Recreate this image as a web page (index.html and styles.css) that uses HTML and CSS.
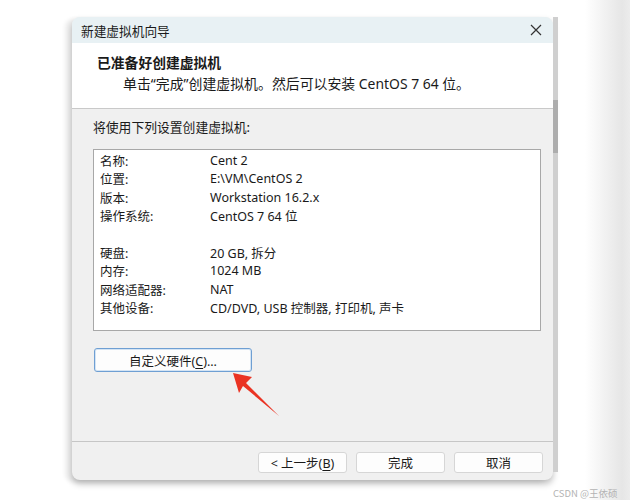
FILE: index.html
```html
<!DOCTYPE html>
<html lang="zh-CN">
<head>
    <meta charset="UTF-8" />
    <title>新建虚拟机向导</title>
    <link rel="stylesheet" href="styles.css">
</head>
<body>
    <div class="window">
        <div class="dialog">
            <div class="titlebar">
                <span>新建虚拟机向导</span>
                <svg class="close" width="12" height="12" viewBox="0 0 12 12">
                    <path d="M1 1 L11 11 M11 1 L1 11" stroke="#333" stroke-width="1.2" fill="none"/>
                </svg>
            </div>

            <div class="header">
                <h1>已准备好创建虚拟机</h1>
                <p>单击“完成”创建虚拟机。然后可以安装 CentOS 7 64 位。</p>
            </div>

            <div class="content">
                <p class="intro">将使用下列设置创建虚拟机:</p>
                <div class="summary">
                    <span>名称:</span><span>Cent 2</span>
                    <span>位置:</span><span>E:\VM\CentOS 2</span>
                    <span>版本:</span><span>Workstation 16.2.x</span>
                    <span>操作系统:</span><span>CentOS 7 64 位</span>
                    <span class="gap"></span><span class="gap"></span>
                    <span>硬盘:</span><span>20 GB, 拆分</span>
                    <span>内存:</span><span>1024 MB</span>
                    <span>网络适配器:</span><span>NAT</span>
                    <span>其他设备:</span><span>CD/DVD, USB 控制器, 打印机, 声卡</span>
                </div>
                <button class="btn custom">自定义硬件(<u>C</u>)...</button>
            </div>

            <div class="footer">
                <button class="btn">&lt; 上一步(<u>B</u>)</button>
                <button class="btn">完成</button>
                <button class="btn">取消</button>
            </div>
        </div>
        <div class="scroll"><div class="thumb"></div></div>
    </div>

    <!-- 红色标注箭头 -->
    <svg class="arrow" width="630" height="500" viewBox="0 0 630 500">
        <polygon points="233,373 252,377 246,383 279,416 243,386 239,393" fill="#ea3323"/>
    </svg>

    <div class="watermark">CSDN @王依硕</div>
</body>
</html>
```

FILE: styles.css
```css
body {
    margin: 0;
    width: 630px;
    height: 500px;
    overflow: hidden;
    position: relative;
    font-family: "Noto Sans", "Noto Sans CJK SC", sans-serif;
    font-size: 12.5px;
    color: #1a1a1a;
    background: linear-gradient(to right, #fff 0, #fff 585px, #e6e6e6 622px, #ececec 630px);
}

.window {
    display: flex;
    padding: 17px 0 0 72px;
}

.dialog {
    width: 481px;
    height: 463px;
    display: flex;
    flex-direction: column;
    background: #f0f0f0;
    border-radius: 8px;
    overflow: hidden;
    box-shadow: -7px 2px 4px rgba(0, 0, 0, 0.07), 0 4px 6px rgba(0, 0, 0, 0.25);
}

.titlebar {
    height: 26px;
    display: flex;
    align-items: center;
    justify-content: space-between;
    padding: 0 11px 0 9px;
    background: #e8f1f4;
    font-family: "Noto Sans CJK SC", sans-serif;
    font-size: 12.7px;
}

.close {
    display: block;
}

.header {
    height: 66px;
    box-sizing: border-box;
    background: #fff;
    border-bottom: 1px solid #c9c9c9;
    padding: 9px 0 0 25px;
}

.header h1 {
    margin: 0;
    font-family: "Noto Sans CJK SC", sans-serif;
    font-size: 13.8px;
    font-weight: 700;
    line-height: 20px;
}

.header p {
    margin: 3px 0 0 26px;
    font-size: 13.9px;
    line-height: 18px;
}

.content {
    flex: 1;
    padding: 9px 12px 0 21px;
}

.intro {
    margin: 0 0 13px;
    line-height: 18px;
    font-family: "Noto Sans CJK SC", sans-serif;
    font-size: 12.8px;
}

.summary {
    height: 182px;
    box-sizing: border-box;
    background: #fff;
    border: 1px solid #a8a8a8;
    padding: 1px 6px;
    display: grid;
    grid-template-columns: 110px 1fr;
    grid-auto-rows: 18.45px;
    align-items: center;
}

.btn {
    font-family: "Noto Sans", "Noto Sans CJK SC", sans-serif;
    font-size: 12.5px;
    color: #1a1a1a;
    background: #fdfdfd;
    border: 1px solid #d6d6d6;
    border-radius: 3px;
    padding: 0;
    width: 89px;
    height: 21px;
}

.btn u {
    text-underline-offset: 2px;
}

.custom {
    margin-top: 17px;
    margin-left: 1px;
    width: 158px;
    height: 24px;
    border: 1px solid #6f9fd3;
    box-shadow: inset 0 0 0 1px #d4e4f4;
}

.footer {
    height: 39px;
    box-sizing: border-box;
    border-top: 1px solid #c6c6c6;
    display: flex;
    justify-content: flex-end;
    gap: 9px;
    padding: 10px 10px 0 0;
}

.scroll {
    width: 5px;
    height: 455px;
    background: #cfcfcf;
    padding-top: 83px;
    box-sizing: border-box;
}

.thumb {
    height: 53px;
    background: #adadad;
}

.arrow {
    position: absolute;
    top: 0;
    left: 0;
    pointer-events: none;
}

.watermark {
    position: absolute;
    left: 553px;
    top: 486px;
    font-family: "Noto Sans CJK SC", sans-serif;
    font-size: 9.5px;
    color: #b3b3b3;
}
```
